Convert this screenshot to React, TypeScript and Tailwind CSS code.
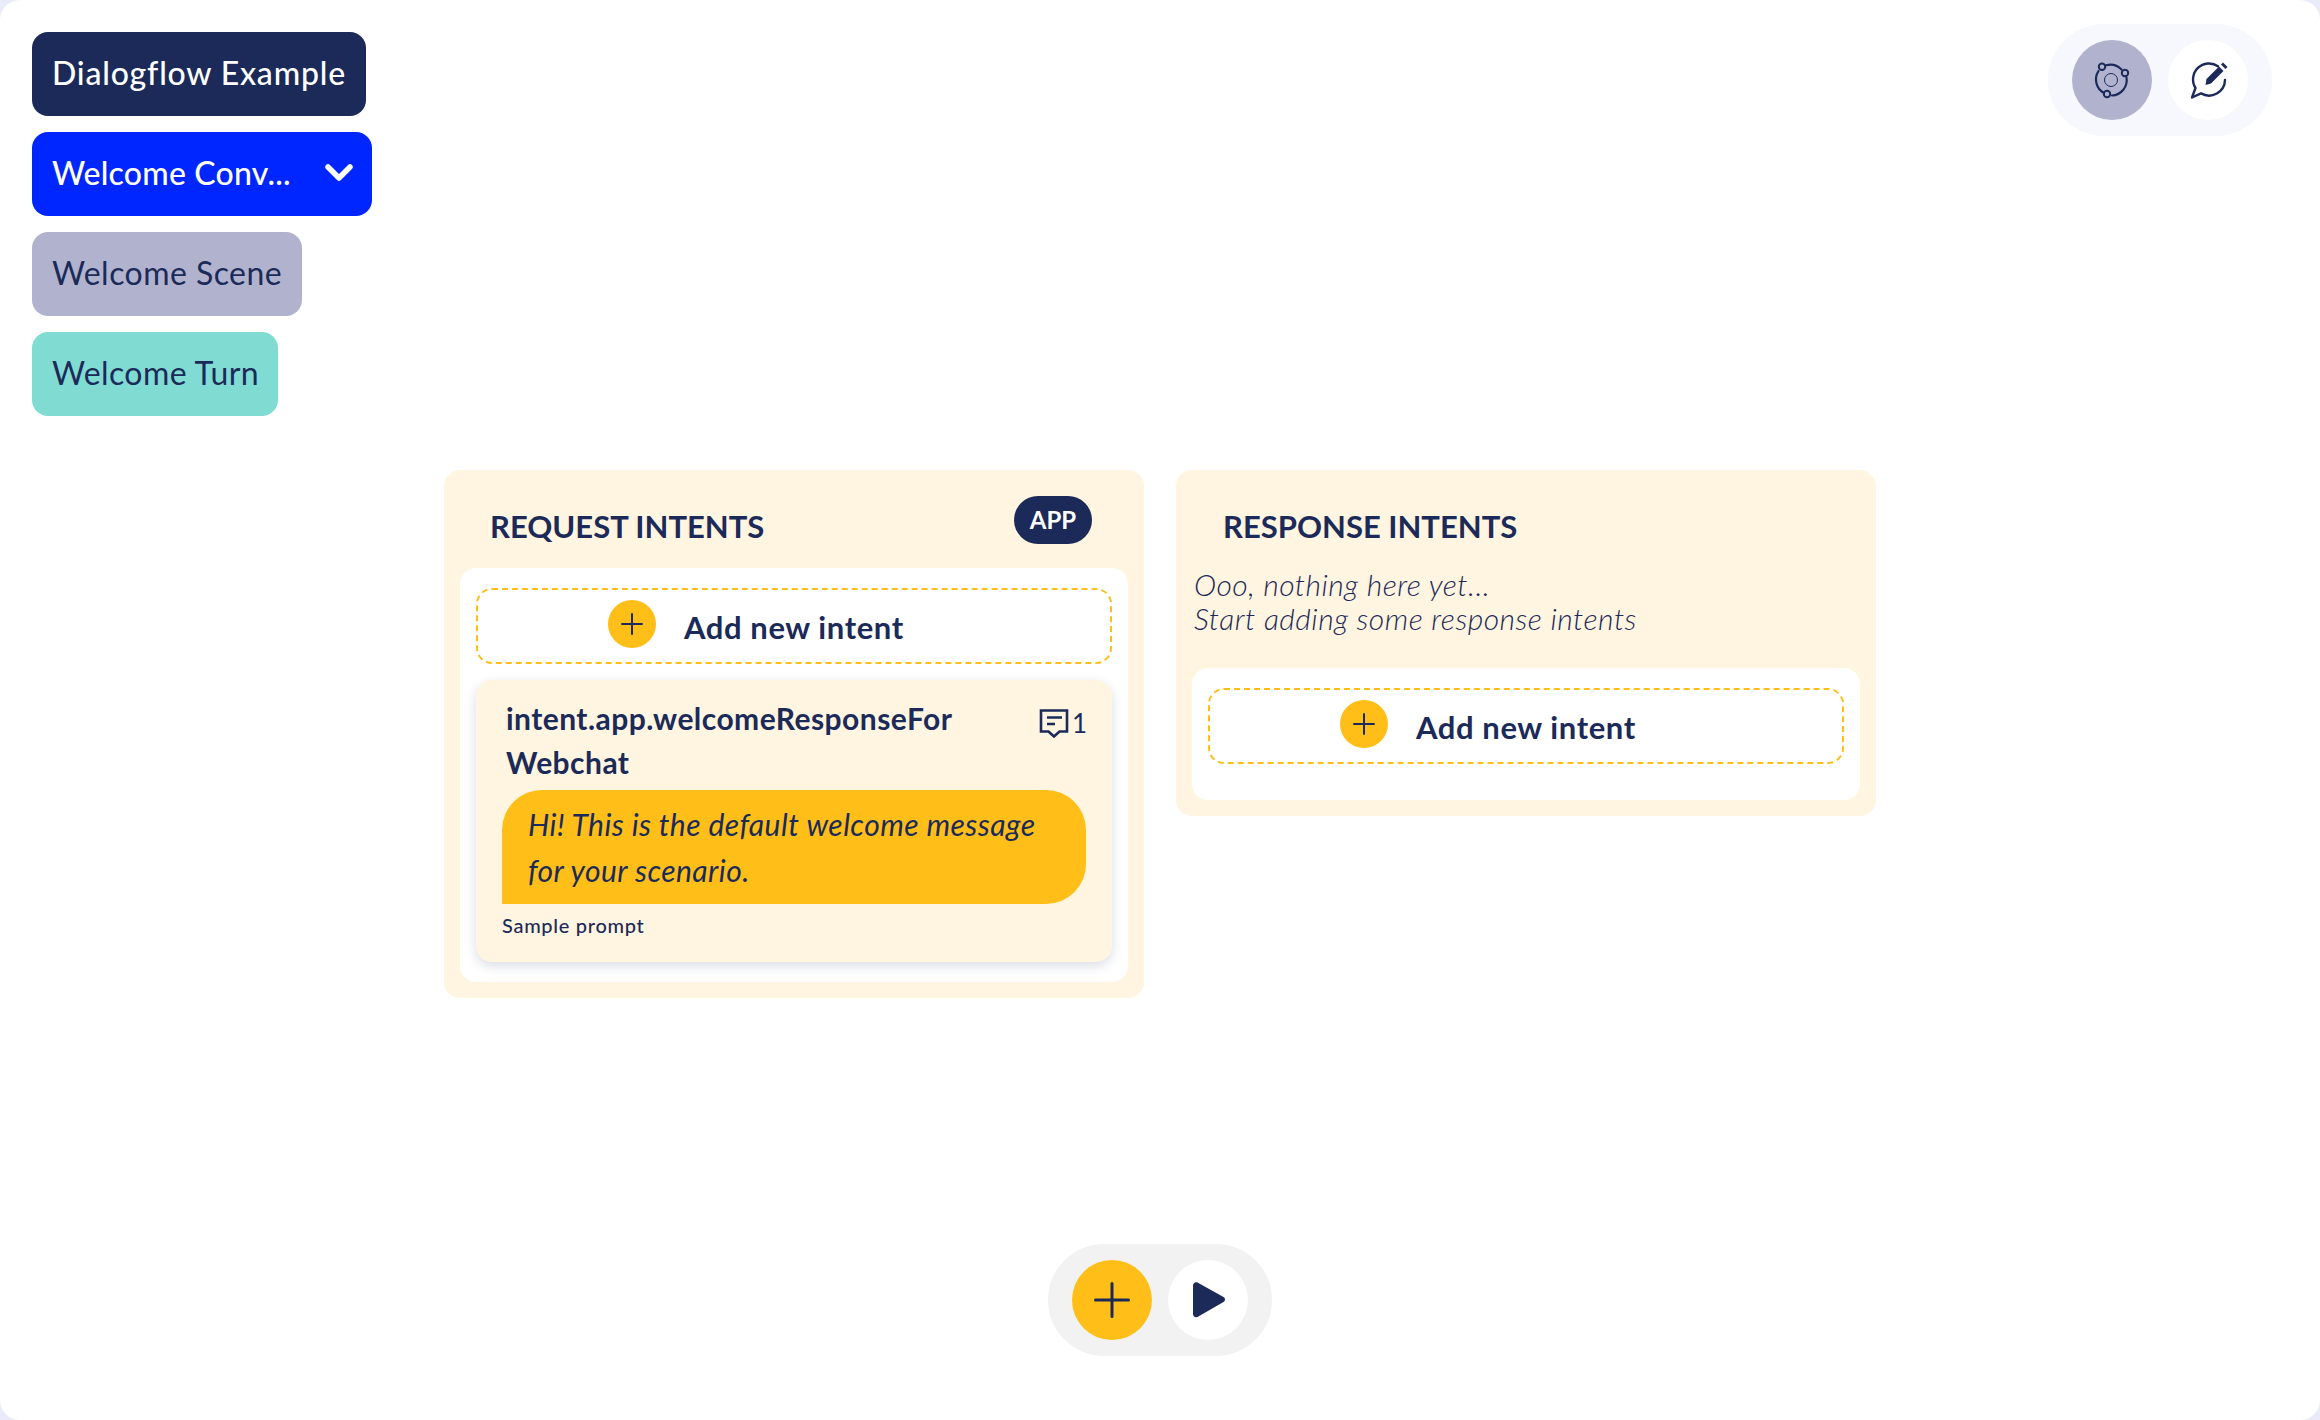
const navy = "#1b2a58";

function AddIntent() {
  return (
    <div className="relative flex h-[76px] items-center rounded-[16px] border-2 border-dashed border-[#ffbe18] bg-white">
      <span className="absolute left-[130px] top-[10px] flex h-12 w-12 items-center justify-center rounded-full bg-[#ffbe18]">
        <svg width="24" height="24" viewBox="0 0 24 24" fill="none" stroke={navy} strokeWidth="2" strokeLinecap="round">
          <path d="M12 2v20M2 12h20" />
        </svg>
      </span>
      <span className="ml-[206px] mt-[2px] text-[31px] font-bold leading-none tracking-[0.6px] text-[#1b2a58]">Add new intent</span>
    </div>
  );
}

function CommentIcon() {
  return (
    <svg width="30" height="30" viewBox="0 0 30 30" fill="none" stroke={navy} strokeWidth="2.6" strokeLinecap="butt">
      <path d="M2 2.500h26v21h-7.500L15 28.500l-5.500-5H2z" />
      <path d="M8 9.500h15M8 16h8" />
    </svg>
  );
}

function OrbitIcon() {
  return (
    <svg width="40" height="40" viewBox="0 0 40 40" fill="none" stroke={navy}>
      <circle cx="19" cy="20" r="6.500" strokeWidth="1" />
      <path
        d="M14 5.300A15.500 15.500 0 0 1 29.500 9.500M34.500 17.500A15.500 15.500 0 0 1 20 35.500M12 33A15.500 15.500 0 0 1 6.500 11"
        strokeWidth="2.200"
        strokeLinecap="round"
      />
      <circle cx="10" cy="6.700" r="3.200" strokeWidth="2" />
      <circle cx="33" cy="13" r="3.200" strokeWidth="2" />
      <circle cx="15" cy="34" r="3.200" strokeWidth="2" />
    </svg>
  );
}

function ChatEditIcon() {
  return (
    <svg width="40" height="40" viewBox="0 0 40 40" fill="none">
      <path
        d="M30 6.200A16 16 0 0 0 7.500 28L4 37.500 13 33.400A16 16 0 0 0 37 20"
        stroke={navy}
        strokeWidth="2.400"
        strokeLinecap="round"
        strokeLinejoin="round"
      />
      <path d="M18.500 19L31 6.500 35.500 11 23 23.500 17.500 25z" fill={navy} />
      <path d="M33 4.500l2-2 4.500 4.500-2 2z" fill={navy} />
    </svg>
  );
}

export default function App() {
  return (
    <div className="h-[1420px] w-[2320px] bg-[#e9ebf8] font-['Lato',sans-serif] text-[#1b2a58]">
      <div className="relative h-full w-full rounded-[20px] bg-white p-8">
        <div className="flex flex-col items-start gap-4 text-[32px] leading-none">
          <div className="flex h-[84px] w-[334px] items-center rounded-[16px] bg-[#1b2a58] pb-[2px] pl-5 font-medium tracking-[0.8px] text-white">
            Dialogflow Example
          </div>
          <div className="flex h-[84px] w-[340px] items-center justify-between rounded-[16px] bg-[#0026ff] pb-[2px] pl-5 pr-[19px] font-medium tracking-[0.2px] text-white">
            <span>Welcome Conv...</span>
            <svg width="28" height="18" viewBox="0 0 28 18" fill="none" stroke="white" strokeWidth="5.500" strokeLinecap="round" strokeLinejoin="round">
              <path d="M3 3l11 11L25 3" />
            </svg>
          </div>
          <div className="flex h-[84px] w-[270px] items-center rounded-[16px] bg-[#b1b3ce] pb-[2px] pl-5 tracking-[0.45px]">Welcome Scene</div>
          <div className="flex h-[84px] w-[246px] items-center rounded-[16px] bg-[#80dcd2] pb-[2px] pl-5 tracking-[0.4px]">Welcome Turn</div>
        </div>

        <div className="ml-[412px] mt-[54px] flex items-start gap-8">
          <section className="h-[528px] w-[700px] rounded-[16px] bg-[#fff5e0] p-4">
            <div className="flex h-[82px] items-start justify-between">
              <h2 className="ml-[30px] mt-[25px] text-[31px] font-bold leading-none">REQUEST INTENTS</h2>
              <span className="mr-[36px] mt-[10px] flex h-12 w-[78px] items-center justify-center rounded-full bg-[#1b2a58] text-[24px] font-bold text-white">APP</span>
            </div>
            <div className="h-[414px] rounded-[16px] bg-white px-4 pt-5">
              <AddIntent />
              <div className="mt-4 h-[282px] rounded-[16px] bg-[#fff5e0] px-[26px] pt-[16px] shadow-[0_4px_12px_rgba(27,42,88,0.16)]">
                <div className="flex items-start justify-between">
                  <div className="ml-[4px] w-[470px] text-[30px] font-bold leading-[44px] tracking-[0.45px] [overflow-wrap:anywhere]">
                    intent.app.welcomeResponseFor Webchat
                  </div>
                  <div className="flex items-center gap-[3px] pt-[12px] text-[26px] leading-none">
                    <CommentIcon />
                    <span className="w-[14px]">1</span>
                  </div>
                </div>
                <div className="mt-[6px] h-[114px] w-[584px] rounded-[40px] rounded-bl-none bg-[#ffbe18] pl-[26px] pr-[20px] pt-[11px] text-[30px] italic leading-[46px] tracking-[0.45px]">
                  Hi! This is the default welcome message for your scenario.
                </div>
                <div className="mt-[9px] text-[20px] font-medium leading-6 tracking-[0.7px]">Sample prompt</div>
              </div>
            </div>
          </section>

          <section className="h-[346px] w-[700px] rounded-[16px] bg-[#fff5e0] p-4">
            <h2 className="ml-[31px] mt-[25px] text-[31px] font-bold leading-none">RESPONSE INTENTS</h2>
            <p className="ml-[2px] mt-[25px] text-[30px] font-light italic leading-[34px] tracking-[0.5px]">
              Ooo, nothing here yet...
              <br />
              Start adding some response intents
            </p>
            <div className="mt-[33px] h-[132px] rounded-[16px] bg-white px-4 pt-5">
              <AddIntent />
            </div>
          </section>
        </div>

        <div className="absolute right-[48px] top-6 flex h-[112px] w-[224px] items-center justify-center gap-4 rounded-full bg-[#f7f8fd]">
          <button className="flex h-20 w-20 items-center justify-center rounded-full bg-[#b1b3ce]">
            <OrbitIcon />
          </button>
          <button className="flex h-20 w-20 items-center justify-center rounded-full bg-white">
            <ChatEditIcon />
          </button>
        </div>

        <div className="absolute left-[1048px] top-[1244px] flex h-[112px] w-[224px] items-center justify-center gap-4 rounded-full bg-[#f2f2f2]">
          <button className="flex h-20 w-20 items-center justify-center rounded-full bg-[#ffbe18]">
            <svg width="40" height="40" viewBox="0 0 40 40" fill="none" stroke={navy} strokeWidth="3" strokeLinecap="round">
              <path d="M20 3.500v33M3.500 20h33" />
            </svg>
          </button>
          <button className="flex h-20 w-20 items-center justify-center rounded-full bg-white">
            <svg width="40" height="40" viewBox="0 0 40 40">
              <path d="M5 5.500c0-2.500 2.500-4 4.500-3l26 14.500c2 1 2 4 0 5L9.500 37c-2 1-4.500-.5-4.500-3z" fill={navy} />
            </svg>
          </button>
        </div>
      </div>
    </div>
  );
}
